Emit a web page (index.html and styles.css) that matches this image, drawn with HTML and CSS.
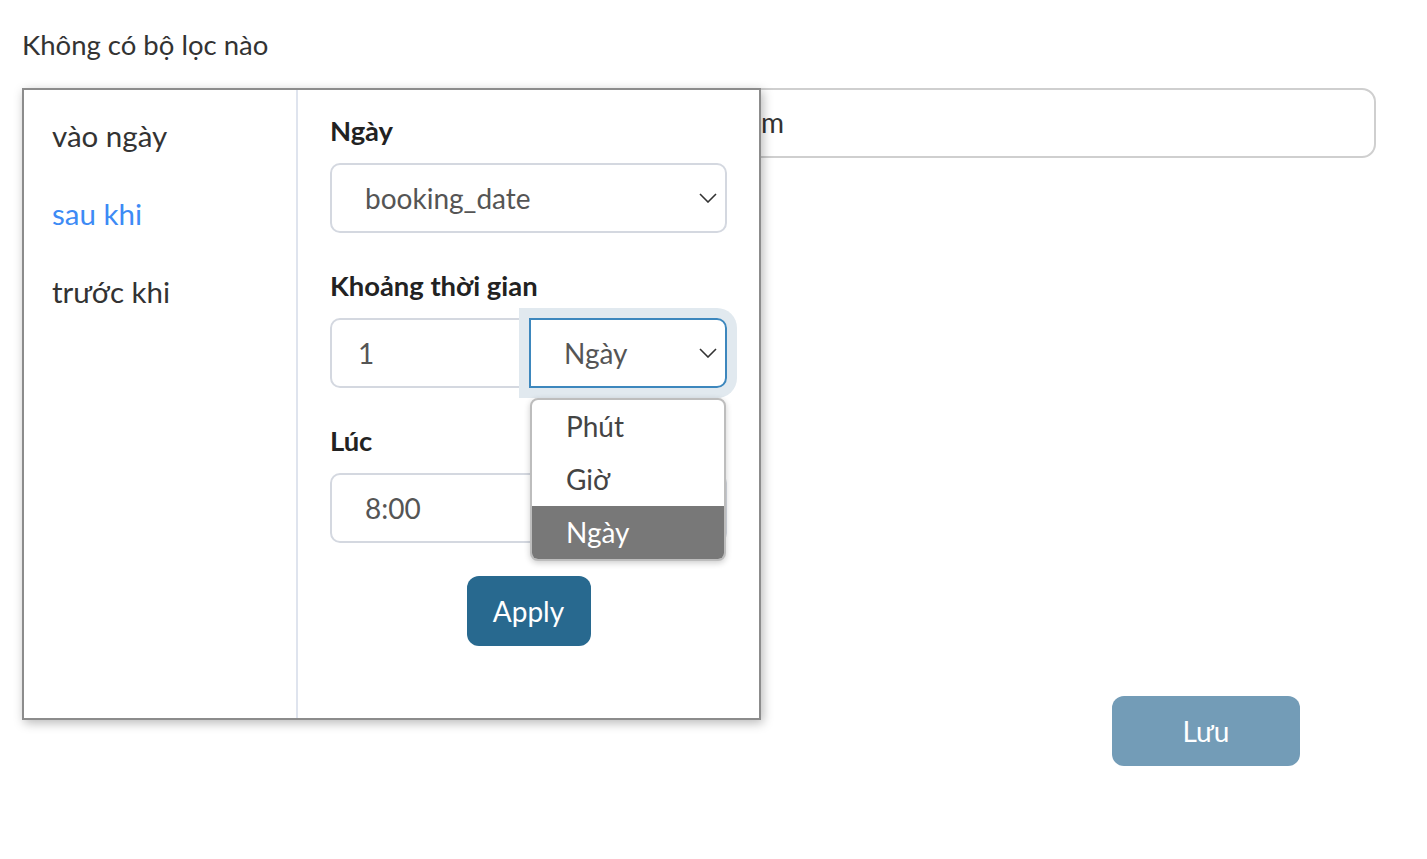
FILE: index.html
```html
<!DOCTYPE html>
<html lang="vi">
<head>
<meta charset="utf-8">
<title>Bộ lọc</title>
<link rel="stylesheet" href="styles.css">
</head>
<body>
<div class="page">
  <p class="title">Không có bộ lọc nào</p>
  <div class="stage">
    <div class="name-input"><span class="ghost">Tên bộ lọc mới cho nhóm</span></div>
    <div class="actions"><button class="save" type="button">Lưu</button></div>

    <div class="popup">
      <ul class="modes">
        <li class="mode">vào ngày</li>
        <li class="mode active">sau khi</li>
        <li class="mode">trước khi</li>
      </ul>
      <div class="form">
        <div class="label">Ngày</div>
        <div class="field select">
          <span>booking_date</span>
          <svg class="chev" width="18" height="10" viewBox="0 0 18 10"><path d="M1 1 L9 9 L17 1" fill="none" stroke="#333" stroke-width="1.6"/></svg>
        </div>

        <div class="label">Khoảng thời gian</div>
        <div class="group">
          <div class="field num">1</div>
          <div class="field select unit">
            <span>Ngày</span>
            <svg class="chev" width="18" height="10" viewBox="0 0 18 10"><path d="M1 1 L9 9 L17 1" fill="none" stroke="#333" stroke-width="1.6"/></svg>
            <ul class="options">
              <li class="opt">Phút</li>
              <li class="opt">Giờ</li>
              <li class="opt selected">Ngày</li>
            </ul>
          </div>
        </div>

        <div class="label">Lúc</div>
        <div class="field last">8:00</div>

        <div class="apply-row"><button class="apply" type="button">Apply</button></div>
      </div>
    </div>
  </div>
</div>
</body>
</html>
```
FILE: styles.css
```css
* { box-sizing: border-box; }
html, body { margin: 0; padding: 0; background: #fff; }
body { font-family: Lato, "Open Sans", "Noto Sans", sans-serif; color: #333; }

.page { padding: 29px 22px 0 22px; }
.title { margin: 0; font-size: 27.5px; line-height: 32px; color: #333; }

.stage { position: relative; margin-top: 27px; width: 1354px; }

.name-input {
  height: 70px;
  border: 2px solid #cfcfcf;
  border-radius: 14px;
  font-size: 28px;
  line-height: 64px;
  color: #333;
  overflow: hidden;
  white-space: nowrap;
}
.ghost { display: inline-block; width: 760px; text-align: right; }

.actions { display: flex; justify-content: flex-end; padding-right: 76px; margin-top: 538px; }
.save {
  width: 188px; height: 70px;
  border: none; border-radius: 12px;
  background: #739cb7; color: #fff;
  font-family: inherit; font-size: 28px;
}

.popup {
  position: absolute; left: 0; top: 0;
  width: 739px; height: 632px;
  border: 2px solid #8c8c8c;
  background: #fff;
  box-shadow: 2px 3px 10px rgba(0,0,0,0.28);
  display: flex;
}

.modes {
  list-style: none; margin: 0; padding: 7px 0 0 28px;
  width: 274px;
  border-right: 2px solid #dfe4ee;
}
.mode { font-size: 29.5px; line-height: 78px; color: #333; }
.mode.active { color: #3d8bf5; }

.form { flex: 1; padding: 23px 32px 0 32px; }
.label { font-size: 27.4px; font-weight: bold; line-height: 36px; color: #222; margin-bottom: 14px; }

.field {
  height: 70px;
  border: 2px solid #d4d8e0;
  border-radius: 10px;
  padding-left: 33px;
  font-size: 28px; line-height: 66px; color: #555;
  margin-bottom: 35px;
  position: relative;
}
.field.last { margin-bottom: 33px; }
.select { display: flex; align-items: center; justify-content: space-between; padding-right: 8px; line-height: normal; }
.chev { flex: none; }

.group { display: flex; margin-bottom: 35px; }
.group .field { margin-bottom: 0; }
.num { flex: 1; border-radius: 10px 0 0 10px; padding-left: 26px; }
.unit {
  width: 198px; flex: none;
  border-color: #3d87bd;
  border-radius: 0 10px 10px 0;
  box-shadow: 0 0 0 10px #e1e9ef;
  z-index: 1;
}

.options {
  position: absolute; left: -1px; top: 78px;
  width: 196px;
  margin: 0; padding: 0; list-style: none;
  background: #fff;
  border: 2px solid #bdbdbd;
  border-radius: 8px;
  box-shadow: 0 2px 6px rgba(0,0,0,0.2);
  overflow: hidden;
  z-index: 2;
}
.opt { height: 53px; line-height: 53px; padding-left: 34px; font-size: 28px; color: #444; }
.opt.selected { background: #787878; color: #fff; }

.apply-row { display: flex; justify-content: center; }
.apply {
  width: 124px; height: 70px;
  border: none; border-radius: 12px;
  background: #28698f; color: #fff;
  font-family: inherit; font-size: 28px;
}
```
